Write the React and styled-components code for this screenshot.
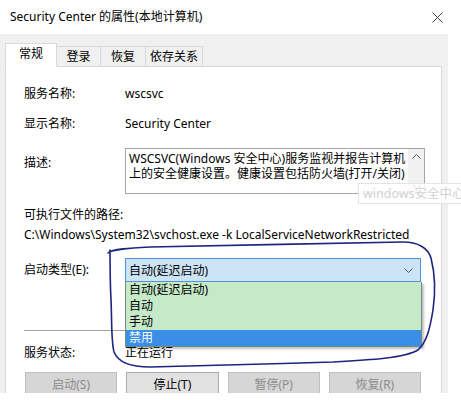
import styled, { createGlobalStyle } from "styled-components";

const GlobalStyle = createGlobalStyle`
  html, body {
    margin: 0;
    padding: 0;
    background: #ffffff;
  }
  body {
    font-family: "Noto Sans", "Noto Sans CJK SC", sans-serif;
    font-size: 12px;
    color: #000000;
  }
`;

const Page = styled.div`
  position: relative;
  width: 461px;
  height: 400px;
  overflow: hidden;
`;

const Window = styled.div`
  width: 448px;
  height: 393px;
  overflow: hidden;
  background: #f0f0f0;
  display: flex;
  flex-direction: column;
`;

const TitleBar = styled.div`
  height: 34px;
  flex: none;
  background: #ffffff;
  display: flex;
  align-items: center;
  justify-content: space-between;
  padding: 0 5px 0 10px;
`;

const Title = styled.div`
  font-size: 12px;
  line-height: 16px;
  color: #000000;
`;

const CloseButton = styled.div`
  width: 11px;
  height: 11px;
  display: flex;
  svg {
    display: block;
  }
`;

const Body = styled.div`
  flex: 1;
  display: flex;
  flex-direction: column;
  padding: 9px 6px 0 5px;
`;

const TabStrip = styled.div`
  display: flex;
  align-items: flex-end;
  height: 24px;
  margin-bottom: -1px;
  position: relative;
  z-index: 1;
`;

const Tab = styled.div`
  width: ${(p) => p.$w}px;
  height: ${(p) => (p.$active ? 24 : 21)}px;
  box-sizing: border-box;
  display: flex;
  align-items: center;
  justify-content: center;
  border: 1px solid #d9d9d9;
  border-bottom: ${(p) => (p.$active ? "1px solid #ffffff" : "1px solid #d9d9d9")};
  border-left: ${(p) => (p.$first || p.$active ? "1px solid #d9d9d9" : "none")};
  background: ${(p) => (p.$active ? "#ffffff" : "#f0f0f0")};
  font-size: 12px;
  line-height: 16px;
  padding-bottom: ${(p) => (p.$active ? 2 : 0)}px;
`;

const Panel = styled.div`
  flex: 1;
  background: #ffffff;
  border: 1px solid #d9d9d9;
  padding: 12px 20px 0 18px;
  display: flex;
  flex-direction: column;
`;

const FieldRow = styled.div`
  display: flex;
  align-items: ${(p) => (p.$top ? "flex-start" : "center")};
  min-height: ${(p) => p.$h || 16}px;
  margin-top: ${(p) => p.$mt || 0}px;
`;

const Label = styled.div`
  width: 101px;
  flex: none;
  line-height: 16px;
  padding-top: ${(p) => p.$pt || 0}px;
`;

const Value = styled.div`
  line-height: 16px;
  white-space: nowrap;
`;

const Caption = styled.div`
  line-height: 16px;
  margin-top: ${(p) => p.$mt || 0}px;
  white-space: nowrap;
`;

const DescBox = styled.div`
  flex: 1;
  height: 46px;
  box-sizing: border-box;
  border: 1px solid #a6a6a6;
  display: flex;
  background: #ffffff;
`;

const DescText = styled.div`
  flex: 1;
  padding: 2px 3px;
  line-height: 15px;
  white-space: nowrap;
  overflow: hidden;
`;

const ScrollTrack = styled.div`
  width: 16px;
  background: #f0f0f0;
  display: flex;
  flex-direction: column;
  justify-content: space-between;
  align-items: center;
  padding: 5px 0 4px;
`;

const ComboWrap = styled.div`
  position: relative;
  flex: 1;
`;

const Combo = styled.div`
  height: 24px;
  box-sizing: border-box;
  border: 1px solid #4d94d8;
  background: #cde4f6;
  display: flex;
  align-items: center;
  justify-content: space-between;
  padding: 0 7px 0 3px;
`;

const DropList = styled.div`
  position: absolute;
  top: 100%;
  left: 0;
  right: -1px;
  border: 1px solid #6e8f7e;
  border-top: none;
  background: #c6e9c8;
  box-shadow: 2px 2px 2px rgba(0, 0, 0, 0.25);
  z-index: 2;
`;

const DropItem = styled.div`
  height: 16px;
  line-height: 16px;
  padding: 0 3px;
  background: ${(p) => (p.$selected ? "#3a8ee6" : "transparent")};
  color: ${(p) => (p.$selected ? "#ffffff" : "#000000")};
`;

const Separator = styled.div`
  height: 1px;
  background: #a0a0a0;
  margin-top: 48px;
`;

const ButtonRow = styled.div`
  display: grid;
  grid-template-columns: repeat(4, 1fr);
  column-gap: 9px;
  margin-top: 11px;
  padding-left: 1px;
`;

const Button = styled.div`
  height: 23px;
  box-sizing: border-box;
  display: flex;
  align-items: center;
  justify-content: center;
  border: 1px solid ${(p) => (p.$disabled ? "#bfbfbf" : "#adadad")};
  background: ${(p) => (p.$disabled ? "#d6d6d6" : "#e1e1e1")};
  color: ${(p) => (p.$disabled ? "#8c8c8c" : "#000000")};
`;

const Watermark = styled.div`
  position: absolute;
  left: 358px;
  top: 183px;
  width: 110px;
  height: 21px;
  box-sizing: border-box;
  border: 1px solid #e4e4e4;
  background: rgba(255, 255, 255, 0.85);
  color: #d2d2d2;
  font-size: 12.5px;
  line-height: 19px;
  padding-left: 4px;
  white-space: nowrap;
  z-index: 3;
`;

const Annotation = styled.svg`
  position: absolute;
  left: 0;
  top: 0;
  pointer-events: none;
  z-index: 4;
`;

const Chevron = ({ up }) => (
  <svg width="9" height="5" viewBox="0 0 9 5">
    <path
      d={up ? "M0.5 4.5 L4.5 0.5 L8.5 4.5" : "M0.5 0.5 L4.5 4.5 L8.5 0.5"}
      fill="none"
      stroke="#5a5a5a"
      strokeWidth="1"
    />
  </svg>
);

const tabs = [
  { name: "常规", w: 52 },
  { name: "登录", w: 44 },
  { name: "恢复", w: 45 },
  { name: "依存关系", w: 57 },
];

const startTypes = ["自动(延迟启动)", "自动", "手动", "禁用"];

const App = () => {
  return (
    <Page>
      <GlobalStyle />
      <Window>
        <TitleBar>
          <Title>Security Center 的属性(本地计算机)</Title>
          <CloseButton>
            <svg width="11" height="11" viewBox="0 0 11 11">
              <path d="M0.5 0.5 L10.5 10.5 M10.5 0.5 L0.5 10.5" stroke="#444" strokeWidth="1" />
            </svg>
          </CloseButton>
        </TitleBar>
        <Body>
          <TabStrip>
            {tabs.map((t, i) => (
              <Tab key={t.name} $w={t.w} $active={i === 0} $first={i === 0}>
                {t.name}
              </Tab>
            ))}
          </TabStrip>
          <Panel>
            <FieldRow $h={30}>
              <Label>服务名称:</Label>
              <Value>wscsvc</Value>
            </FieldRow>
            <FieldRow $h={30}>
              <Label>显示名称:</Label>
              <Value>Security Center</Value>
            </FieldRow>
            <FieldRow $top $mt={9}>
              <Label $pt={7}>描述:</Label>
              <DescBox>
                <DescText>
                  WSCSVC(Windows 安全中心)服务监视并报告计算机
                  <br />
                  上的安全健康设置。健康设置包括防火墙(打开/关闭)
                </DescText>
                <ScrollTrack>
                  <Chevron up />
                  <Chevron />
                </ScrollTrack>
              </DescBox>
            </FieldRow>
            <Caption $mt={13}>可执行文件的路径:</Caption>
            <Caption $mt={4}>C:\Windows\System32\svchost.exe -k LocalServiceNetworkRestricted</Caption>
            <FieldRow $h={24} $mt={15}>
              <Label>启动类型(E):</Label>
              <ComboWrap>
                <Combo>
                  <span>自动(延迟启动)</span>
                  <Chevron />
                </Combo>
                <DropList>
                  {startTypes.map((s, i) => (
                    <DropItem key={s} $selected={i === startTypes.length - 1}>
                      {s}
                    </DropItem>
                  ))}
                </DropList>
              </ComboWrap>
            </FieldRow>
            <Separator />
            <FieldRow $mt={14}>
              <Label>服务状态:</Label>
              <Value>正在运行</Value>
            </FieldRow>
            <ButtonRow>
              <Button $disabled>启动(S)</Button>
              <Button>停止(T)</Button>
              <Button $disabled>暂停(P)</Button>
              <Button $disabled>恢复(R)</Button>
            </ButtonRow>
          </Panel>
        </Body>
      </Window>
      <Watermark>windows安全中心</Watermark>
      <Annotation width="461" height="400" viewBox="0 0 461 400">
        <path
          d="M108 253 C 112 249, 130 248, 150 247 C 220 245, 330 244, 403 242 C 418 242, 428 248, 431 258 C 434 270, 436 290, 433 310 C 430 328, 427 342, 418 350 C 405 358, 370 360, 333 362 C 270 364, 200 366, 150 367 C 130 367, 118 362, 114 352 C 111 340, 112 320, 111 300 C 110 280, 110 265, 110 250"
          fill="none"
          stroke="#1d2580"
          strokeWidth="1.6"
          strokeLinecap="round"
        />
      </Annotation>
    </Page>
  );
};

export default App;
